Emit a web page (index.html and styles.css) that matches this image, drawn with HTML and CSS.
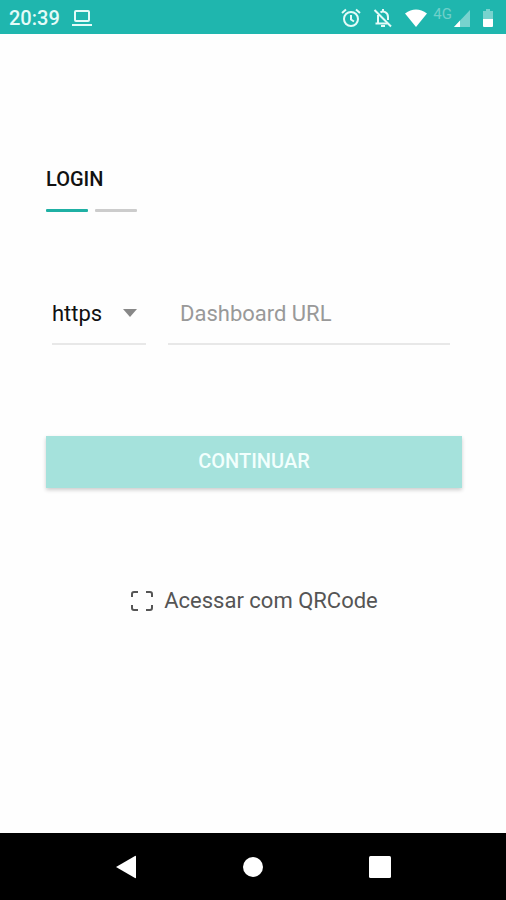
FILE: index.html
```html
<!DOCTYPE html>
<html lang="pt-BR">
<head>
  <meta charset="UTF-8">
  <meta name="viewport" content="width=device-width, initial-scale=1.0">
  <title>Login</title>
  <link rel="stylesheet" href="styles.css">
</head>
<body>

  <header class="status-bar">
    <span class="clock">20:39</span>
    <svg class="laptop" width="22" height="18" viewBox="0 0 22 18" fill="none" stroke="currentColor" stroke-width="2">
      <rect x="4" y="2" width="14" height="10" rx="1"/>
      <path d="M1 16h20"/>
    </svg>
    <div class="status-icons">
      <svg width="20" height="20" viewBox="0 0 20 20" fill="none" stroke="currentColor" stroke-width="2">
        <circle cx="10" cy="11" r="7"/>
        <path d="M10 7v4.5l3 2M1 5l4-3.500M19 5l-4-3.500"/>
      </svg>
      <svg width="20" height="20" viewBox="0 0 20 20" fill="none" stroke="currentColor" stroke-width="2">
        <path d="M5 7v8M7.500 4.500C10 2.500 15 4 15 9v3M10 1v3M1.500 2l16.500 16.500"/>
        <path d="M2.500 15.500h12"/>
        <path d="M8 18h4"/>
      </svg>
      <svg class="wifi" width="22" height="18" viewBox="0 0 22 18" fill="currentColor">
        <path d="M0 4.500Q11-3.500 22 4.500L11 18z"/>
      </svg>
      <span class="network">4G</span>
      <svg class="signal" width="16" height="18" viewBox="0 0 16 18" fill="currentColor">
        <path d="M16 1v17H0z" opacity=".4"/>
        <path d="M6 11.500V18H0z"/>
      </svg>
      <svg class="battery" width="12" height="20" viewBox="0 0 12 20" fill="currentColor">
        <path d="M4 1h4v2h3v9H1V3h3z" opacity=".4"/>
        <path d="M1 11h10v7a1 1 0 0 1-1 1H2a1 1 0 0 1-1-1z"/>
      </svg>
    </div>
  </header>

  <main>
    <h1>LOGIN</h1>
    <div class="steps">
      <span class="step active"></span>
      <span class="step"></span>
    </div>

    <form>
      <div class="url-row">
        <select class="protocol" aria-label="Protocolo">
          <option>https</option>
          <option>http</option>
        </select>
        <input class="url" type="text" placeholder="Dashboard URL" aria-label="Dashboard URL">
      </div>
      <button class="continue" type="button">CONTINUAR</button>
    </form>

    <a class="qrcode" href="#">
      <svg width="24" height="22" viewBox="0 0 24 22" fill="none" stroke="currentColor" stroke-width="2">
        <path d="M2 7V4a2 2 0 0 1 2-2h4M16 2h4a2 2 0 0 1 2 2v3M22 15v3a2 2 0 0 1-2 2h-4M8 20H4a2 2 0 0 1-2-2v-3"/>
      </svg>
      Acessar com QRCode
    </a>
  </main>

  <nav class="nav-bar">
    <button type="button" aria-label="Voltar">
      <svg width="24" height="24" viewBox="0 0 24 24" fill="currentColor"><path d="M2 12L21 1q1-.5 1 .5v21q0 1-1 .5z"/></svg>
    </button>
    <button type="button" aria-label="Início">
      <svg width="24" height="24" viewBox="0 0 24 24" fill="currentColor"><circle cx="12" cy="12" r="10"/></svg>
    </button>
    <button type="button" aria-label="Recentes">
      <svg width="24" height="24" viewBox="0 0 24 24" fill="currentColor"><rect x="1" y="1" width="22" height="22" rx="1.500"/></svg>
    </button>
  </nav>

</body>
</html>
```

FILE: styles.css
```css
* {
  margin: 0;
  padding: 0;
  box-sizing: border-box;
}

body {
  min-height: 100vh;
  display: flex;
  flex-direction: column;
  background-color: #fefefe;
  font-family: Roboto, sans-serif;
  color: #111;
}

svg {
  display: block;
}

.status-bar {
  height: 34px;
  padding: 2px 12px 0 9px;
  display: flex;
  align-items: center;
  background-color: #1fb6ae;
  color: #e4fbf8;
}

.clock {
  font-size: 20px;
  font-weight: 500;
}

.laptop {
  margin-left: 11px;
}

.status-icons {
  margin-left: auto;
  display: flex;
  align-items: center;
  gap: 12px;
}

.wifi,
.signal,
.battery {
  color: #fff;
}

.network {
  margin: 0 -10px 8px -6px;
  font-size: 15px;
  line-height: 16px;
  color: #6fd0ca;
}

main {
  flex: 1;
  padding: 132px 44px 0 46px;
  display: flex;
  flex-direction: column;
}

h1 {
  font-size: 20px;
  line-height: 26px;
  font-weight: 500;
}

.steps {
  margin-top: 17px;
  display: flex;
  gap: 7px;
}

.step {
  width: 42px;
  height: 3px;
  border-radius: 1px;
  background-color: #ccc;
}

.step.active {
  background-color: #1fb0a4;
}

.url-row {
  margin: 71px 12px 0 6px;
  display: flex;
  gap: 22px;
}

.protocol,
.url {
  height: 62px;
  border: none;
  border-bottom: 2px solid #e8e8e8;
  border-radius: 0;
  outline: none;
  background-color: transparent;
  font-family: inherit;
  font-size: 22px;
  color: #111;
}

.protocol {
  width: 94px;
  appearance: none;
  background-image: url("data:image/svg+xml,%3Csvg xmlns='http://www.w3.org/2000/svg' width='14' height='8'%3E%3Cpath d='M0 0h14L7 8z' fill='%23888'/%3E%3C/svg%3E");
  background-repeat: no-repeat;
  background-position: right 9px center;
}

.url {
  flex: 1;
  min-width: 0;
  padding-left: 12px;
}

.url::placeholder {
  color: #999;
}

.continue {
  width: 100%;
  height: 52px;
  margin-top: 91px;
  padding-bottom: 2px;
  border: none;
  background-color: #a5e2dc;
  box-shadow: 0 2px 4px rgba(0, 0, 0, 0.2);
  font-family: inherit;
  font-size: 20px;
  font-weight: 500;
  color: #f2fffd;
}

.qrcode {
  margin-top: 97px;
  display: flex;
  justify-content: center;
  align-items: center;
  gap: 10px;
  font-size: 22px;
  line-height: 32px;
  color: #555;
  text-decoration: none;
}

.nav-bar {
  height: 67px;
  padding: 0 62px;
  display: flex;
  background-color: #000;
}

.nav-bar button {
  flex: 1;
  display: flex;
  justify-content: center;
  align-items: center;
  border: none;
  background: none;
  color: #fff;
}
```
